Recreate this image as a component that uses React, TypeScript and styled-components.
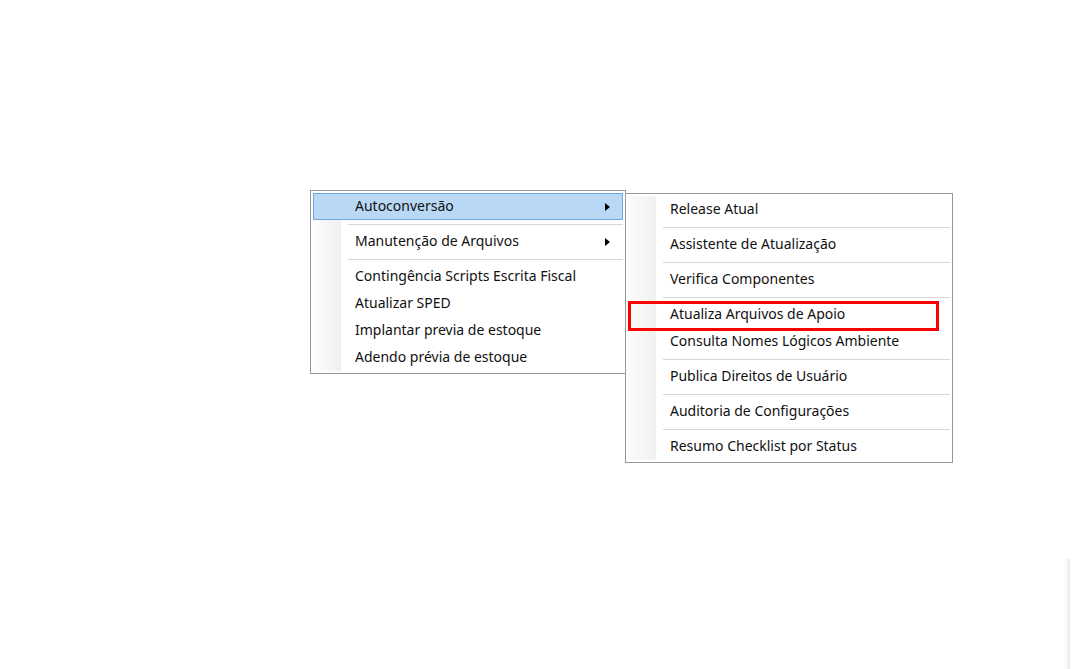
import React from "react";
import styled, { createGlobalStyle } from "styled-components";

const GlobalStyle = createGlobalStyle`
  html, body {
    margin: 0;
    padding: 0;
    background: #ffffff;
  }
  body {
    font-family: "Noto Sans", "Liberation Sans", sans-serif;
  }
`;

const Page = styled.div`
  width: 1072px;
  height: 669px;
  box-sizing: border-box;
  padding: 190px 0 0 310px;
  display: flex;
  align-items: flex-start;
  overflow: hidden;
`;

const Menu = styled.div<{ $width: number; $top?: number; $overlap?: number }>`
  width: ${(p) => p.$width}px;
  box-sizing: border-box;
  margin-top: ${(p) => p.$top || 0}px;
  margin-left: ${(p) => -(p.$overlap || 0)}px;
  border: 1px solid #979797;
  background: #ffffff;
  padding: 2px;
  display: flex;
  flex-direction: column;
  position: relative;
  &::before {
    content: "";
    position: absolute;
    left: 2px;
    top: 2px;
    bottom: 2px;
    width: 28px;
    background: linear-gradient(to right, #fcfcfc, #f0f0f0);
  }
`;

const Row = styled.div<{ $active?: boolean; $marked?: boolean }>`
  position: relative;
  z-index: 1;
  height: 27px;
  box-sizing: border-box;
  display: flex;
  align-items: center;
  padding-left: 41px;
  padding-right: 12px;
  padding-bottom: 2px;
  font-size: 14px;
  color: #111;
  border: 1px solid ${(p) => (p.$active ? "#6ea8e2" : "transparent")};
  background: ${(p) => (p.$active ? "#b9d8f6" : "transparent")};
  white-space: nowrap;
  ${(p) =>
    p.$marked &&
    `
    &::after {
      content: "";
      position: absolute;
      left: -1px;
      top: -1px;
      right: 10px;
      bottom: -4px;
      border: 3px solid #ff0000;
    }
  `}
`;

const Label = styled.span`
  flex: 1;
`;

const Arrow = styled.span`
  width: 0;
  height: 0;
  margin-top: 2px;
  border-top: 4px solid transparent;
  border-bottom: 4px solid transparent;
  border-left: 5px solid #000;
`;

const Separator = styled.div`
  height: 8px;
  display: flex;
  align-items: center;
  padding-left: 35px;
  position: relative;
  z-index: 1;
  &::after {
    content: "";
    flex: 1;
    height: 1px;
    margin-top: 2px;
    background: #d7d7d7;
    border-bottom: 1px solid #ffffff;
  }
`;

const EdgeShade = styled.div`
  position: fixed;
  right: 2px;
  bottom: 0;
  width: 6px;
  height: 110px;
  background: linear-gradient(to right, #ffffff, #f2f2f2 70%, #e4e4e4);
`;

type Item = { label: string; sub?: boolean; active?: boolean; marked?: boolean } | "sep";

const mainItems: Item[] = [
  { label: "Autoconversão", sub: true, active: true },
  "sep",
  { label: "Manutenção de Arquivos", sub: true },
  "sep",
  { label: "Contingência Scripts Escrita Fiscal" },
  { label: "Atualizar SPED" },
  { label: "Implantar previa de estoque" },
  { label: "Adendo prévia de estoque" },
];

const subItems: Item[] = [
  { label: "Release Atual" },
  "sep",
  { label: "Assistente de Atualização" },
  "sep",
  { label: "Verifica Componentes" },
  "sep",
  { label: "Atualiza Arquivos de Apoio", marked: true },
  { label: "Consulta Nomes Lógicos Ambiente" },
  "sep",
  { label: "Publica Direitos de Usuário" },
  "sep",
  { label: "Auditoria de Configurações" },
  "sep",
  { label: "Resumo Checklist por Status" },
];

const renderItems = (items: Item[]) =>
  items.map((it, i) =>
    it === "sep" ? (
      <Separator key={i} />
    ) : (
      <Row key={i} $active={it.active} $marked={it.marked}>
        <Label>{it.label}</Label>
        {it.sub && <Arrow />}
      </Row>
    )
  );

const App = () => {
  return (
    <>
      <GlobalStyle />
      <Page>
        <Menu $width={316}>{renderItems(mainItems)}</Menu>
        <Menu $width={328} $top={3} $overlap={1}>
          {renderItems(subItems)}
        </Menu>
      </Page>
      <EdgeShade />
    </>
  );
};

export default App;
